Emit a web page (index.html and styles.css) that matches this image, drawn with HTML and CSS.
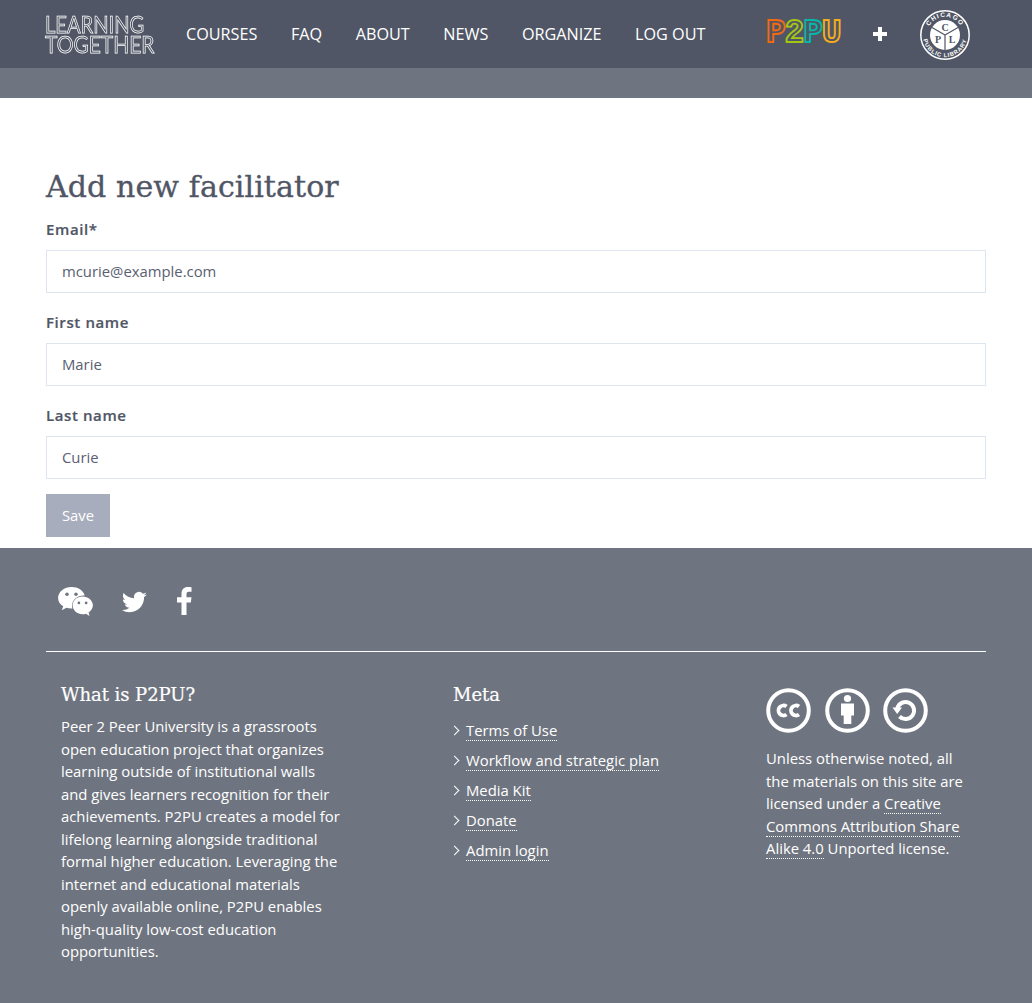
FILE: index.html
```html
<!DOCTYPE html>
<html lang="en">
<head>
<meta charset="utf-8">
<title>Add new facilitator</title>
<link rel="stylesheet" href="styles.css">
</head>
<body>
<header class="topbar">
  <a class="brand"><span class="brand-a">LEARNING</span><span class="brand-b">TOGETHER</span></a>
  <nav class="nav">
    <a>Courses</a><a>FAQ</a><a>About</a><a>News</a><a>Organize</a><a>Log out</a>
  </nav>
  <div class="partners">
    <span class="p2pu"><span class="c1">P</span><span class="c2">2</span><span class="c3">P</span><span class="c4">U</span></span>
    <svg class="plus" viewBox="0 0 14 14" width="14" height="14"><path d="M5 0h4v5h5v4H9v5H5V9H0V5h5z" fill="#fff"/></svg>
    <svg class="cpl" viewBox="0 0 50 50" width="50" height="50">
      <circle cx="25" cy="25" r="24.200" fill="#505665" stroke="#fff" stroke-width="1.500"/>
      <circle cx="25" cy="25" r="15" fill="#fff"/>
      <path d="M25 25 12 17.500M25 25 38 17.500M25 25V40" fill="none" stroke="#505665" stroke-width="1.200"/>
      <defs>
        <path id="arcTop" d="M7 25a18 18 0 0 1 36 0"/>
        <path id="arcBot" d="M2.800 25a22.200 22.200 0 0 0 44.400 0"/>
      </defs>
      <text class="cpl-arc cpl-top"><textPath href="#arcTop" startOffset="50%" text-anchor="middle">CHICAGO</textPath></text>
      <text class="cpl-arc"><textPath href="#arcBot" startOffset="50%" text-anchor="middle">PUBLIC LIBRARY</textPath></text>
      <text class="cpl-l" x="25" y="21" text-anchor="middle">C</text>
      <text class="cpl-l" x="18" y="32.500" text-anchor="middle">P</text>
      <text class="cpl-l" x="32" y="32.500" text-anchor="middle">L</text>
    </svg>
  </div>
</header>
<div class="band"></div>
<main class="content">
  <h1>Add new facilitator</h1>
  <form class="form">
    <div class="field"><label for="e">Email*</label><input id="e" value="mcurie@example.com"></div>
    <div class="field"><label for="f">First name</label><input id="f" value="Marie"></div>
    <div class="field"><label for="l">Last name</label><input id="l" value="Curie"></div>
    <button type="button" class="save">Save</button>
  </form>
</main>
<footer class="footer">
  <div class="social">
    <svg class="i-wechat" viewBox="0 0 36 30" width="35" height="29">
      <path d="M14 0C6.300 0 0 5 0 11.300c0 3.600 2 6.600 5.300 8.700L3.800 24l4.800-2.500c1.700.5 3.500.8 5 .8h1.200a10 10 0 0 1-.4-3c0-6 5.400-10.600 12.100-10.600h1C26 3.400 20.500 0 14 0z" fill="#fff"/>
      <path d="M36 19c0-5.200-5-9.300-10.700-9.300S15 13.800 15 19s5 9.300 10.300 9.300c1.200 0 2.400-.2 3.500-.6l3.700 2.300-1-3.500C34.200 24.700 36 22 36 19z" fill="#fff"/>
      <circle cx="9.200" cy="7.500" r="1.800" fill="#6f7580"/><circle cx="18.500" cy="7.500" r="1.800" fill="#6f7580"/>
      <circle cx="21.500" cy="16.500" r="1.400" fill="#6f7580"/><circle cx="29" cy="16.500" r="1.400" fill="#6f7580"/>
    </svg>
    <svg class="i-twitter" viewBox="0 0 24 24" width="27" height="27">
      <path d="M23 4.900a9 9 0 0 1-2.600.7 4.600 4.600 0 0 0 2-2.500 9 9 0 0 1-2.900 1.100 4.500 4.500 0 0 0-7.800 4.100A12.900 12.900 0 0 1 2.300 3.600a4.500 4.500 0 0 0 1.400 6 4.500 4.500 0 0 1-2-.6v.1a4.500 4.500 0 0 0 3.600 4.400 4.500 4.500 0 0 1-2 .1 4.500 4.500 0 0 0 4.200 3.100A9.100 9.100 0 0 1 .8 18.600 12.800 12.800 0 0 0 7.700 20.600c8.300 0 12.800-6.900 12.800-12.800v-.6A9 9 0 0 0 23 4.900z" fill="#fff"/>
    </svg>
    <svg class="i-fb" viewBox="0 0 15 27" width="15" height="28" preserveAspectRatio="none">
      <path d="M4.500 27V15H0v-5h4.500V6.500C4.500 2.200 7 0 10.800 0c1.800 0 3.200.1 3.700.2v4.400h-2.600c-2 0-2.400 1-2.400 2.400V10h5l-.7 5H9.500v12z" fill="#fff"/>
    </svg>
  </div>
  <div class="columns">
    <section class="col-a">
      <h3>What is P2PU?</h3>
      <p>Peer 2 Peer University is a grassroots open education project that organizes learning outside of institutional walls and gives learners recognition for their achievements. P2PU creates a model for lifelong learning alongside traditional formal higher education. Leveraging the internet and educational materials openly available online, P2PU enables high-quality low-cost education opportunities.</p>
    </section>
    <section class="col-b">
      <h3>Meta</h3>
      <ul class="links">
        <li><a>Terms of Use</a></li>
        <li><a>Workflow and strategic plan</a></li>
        <li><a>Media Kit</a></li>
        <li><a>Donate</a></li>
        <li><a>Admin login</a></li>
      </ul>
    </section>
    <section class="col-c">
      <div class="cc">
        <svg viewBox="0 0 45 45" width="45" height="45"><circle cx="22.500" cy="22.500" r="20.300" fill="none" stroke="#fff" stroke-width="4"/><path d="M20.500 18.500a5 5 0 1 0 0 8M33 18.500a5 5 0 1 0 0 8" fill="none" stroke="#fff" stroke-width="3.800"/></svg>
        <svg viewBox="0 0 45 45" width="45" height="45"><circle cx="22.500" cy="22.500" r="20.300" fill="none" stroke="#fff" stroke-width="4"/><circle cx="22.500" cy="10.500" r="3.600" fill="#fff"/><path d="M16 15.500h13v12h-2.700V36h-7.600v-8.500H16z" fill="#fff"/></svg>
        <svg viewBox="0 0 45 45" width="45" height="45"><circle cx="22.500" cy="22.500" r="20.300" fill="none" stroke="#fff" stroke-width="4"/><path d="M14.300 20.500a8.500 8.500 0 1 1 2.200 8" fill="none" stroke="#fff" stroke-width="4"/><path d="M9.500 19.500h9.500l-4.800 6.500z" fill="#fff"/></svg>
      </div>
      <p>Unless otherwise noted, all the materials on this site are licensed under a <a>Creative Commons Attribution Share Alike 4.0</a> Unported license.</p>
    </section>
  </div>
</footer>
</body>
</html>
```
FILE: styles.css
```css
* { box-sizing: border-box; }
html, body { margin: 0; padding: 0; }
body {
  font-family: "Open Sans", "Liberation Sans", sans-serif;
  font-size: 14.850px;
  line-height: 22.500px;
  color: #fff;
  background: #fff;
}
.topbar {
  height: 68px;
  background: #505665;
  display: flex;
  align-items: center;
  padding: 0 62px 0 45px;
}
.brand {
  width: 141px;
  display: flex;
  flex-direction: column;
  font-family: Lato, sans-serif;
  font-weight: 400;
  line-height: 20px;
  font-size: 23px;
  color: #505665;
  -webkit-text-stroke: .75px #fff;
  white-space: nowrap;
  will-change: transform;
}
.brand-a { transform: scaleX(.875); transform-origin: left center; }
.brand-b { transform: scaleX(.91); transform-origin: left center; }
.nav { display: flex; gap: 33.600px; font-size: 16.200px; }
.nav a { text-transform: uppercase; color: #fff; }
.partners { margin-left: auto; display: flex; align-items: center; }
.p2pu {
  font-family: "Liberation Mono", monospace;
  font-weight: 700;
  font-size: 33px;
  line-height: 30px;
  letter-spacing: -1.200px;
  -webkit-text-stroke: 1.800px;
  color: #505665;
  width: 75px;
  white-space: nowrap;
}
.c1 { -webkit-text-stroke-color: #f26a0f; }
.c2 { -webkit-text-stroke-color: #a5c714; }
.c3 { -webkit-text-stroke-color: #05b8a8; }
.c4 { -webkit-text-stroke-color: #f5ae1b; }
.plus { margin-left: 32px; }
.cpl { margin-left: 33px; display: block; margin-top: 1px; }
.cpl-arc { font-size: 5.800px; fill: #fff; font-family: "Liberation Sans", sans-serif; font-weight: 700; letter-spacing: .8px; }
.cpl-top { font-size: 6.500px; letter-spacing: 1.100px; }
.cpl-l { font-family: "Liberation Serif", serif; font-weight: 700; font-size: 10px; fill: #505665; }
.band { height: 30px; background: #6f7580; }
.content { height: 450px; padding: 0 46px; color: #4a4f5c; }
h1 {
  margin: 0 0 10px;
  padding-top: 67px;
  font-family: "DejaVu Serif", serif;
  font-weight: 400;
  font-size: 30px;
  line-height: 44px;
  letter-spacing: .1px;
  color: #505665;
  -webkit-text-stroke: .35px #505665;
}
.form { display: flex; flex-direction: column; align-items: flex-start; }
.field { width: 100%; margin-bottom: 15px; display: flex; flex-direction: column; }
.field label {
  font-weight: 600;
  font-size: 15px;
  line-height: 21px;
  letter-spacing: .6px;
  margin-bottom: 10px;
  color: #505665;
  -webkit-text-stroke: .2px #505665;
}
.field input {
  height: 43px;
  width: 100%;
  border: 1px solid #dde5ee;
  background: #fff;
  padding: 0 15px 2px;
  font: inherit;
  color: #5a6070;
  outline: none;
}
.field + .field { margin-top: 4px; }
.save {
  height: 43px;
  width: 64px;
  border: 0;
  padding: 0;
  background: #a8adbd;
  color: #fff;
  font: inherit;
}
.footer { height: 455px; background: #6f7580; padding: 0 46px; }
.social {
  height: 104px;
  border-bottom: 1px solid #fff;
  display: flex;
  align-items: flex-start;
  padding: 39px 0 0 12px;
}
.i-wechat { display: block; margin-right: 28px; }
.i-twitter { display: block; margin-right: 29px; margin-top: 2px; }
.i-fb { display: block; }
.columns {
  display: grid;
  grid-template-columns: 392px 313px 1fr;
  padding: 31px 0 0 15px;
}
h3 {
  margin: 0 0 8px;
  font-family: "DejaVu Serif", serif;
  font-weight: 400;
  font-size: 18px;
  line-height: 24px;
  letter-spacing: -.05px;
  color: #fff;
  -webkit-text-stroke: .2px #fff;
}
.col-a p { margin: 0; width: 282px; }
.col-c p { margin: 14px 0 0; width: 212px; }
.links { list-style: none; margin: 0; padding: 4px 0 0; display: flex; flex-direction: column; gap: 7.500px; }
.links li { padding-left: 13px; position: relative; }
.links li::before {
  content: "";
  position: absolute;
  left: -2px;
  top: 8px;
  width: 6px;
  height: 6px;
  border-top: 1.400px solid #fff;
  border-right: 1.400px solid #fff;
  transform: rotate(45deg);
}
a { color: #fff; }
.links a, .col-c a { border-bottom: 1px dotted #fff; }
.cc { display: flex; gap: 13.500px; margin-top: 5px; }
.cc svg { display: block; }
```
